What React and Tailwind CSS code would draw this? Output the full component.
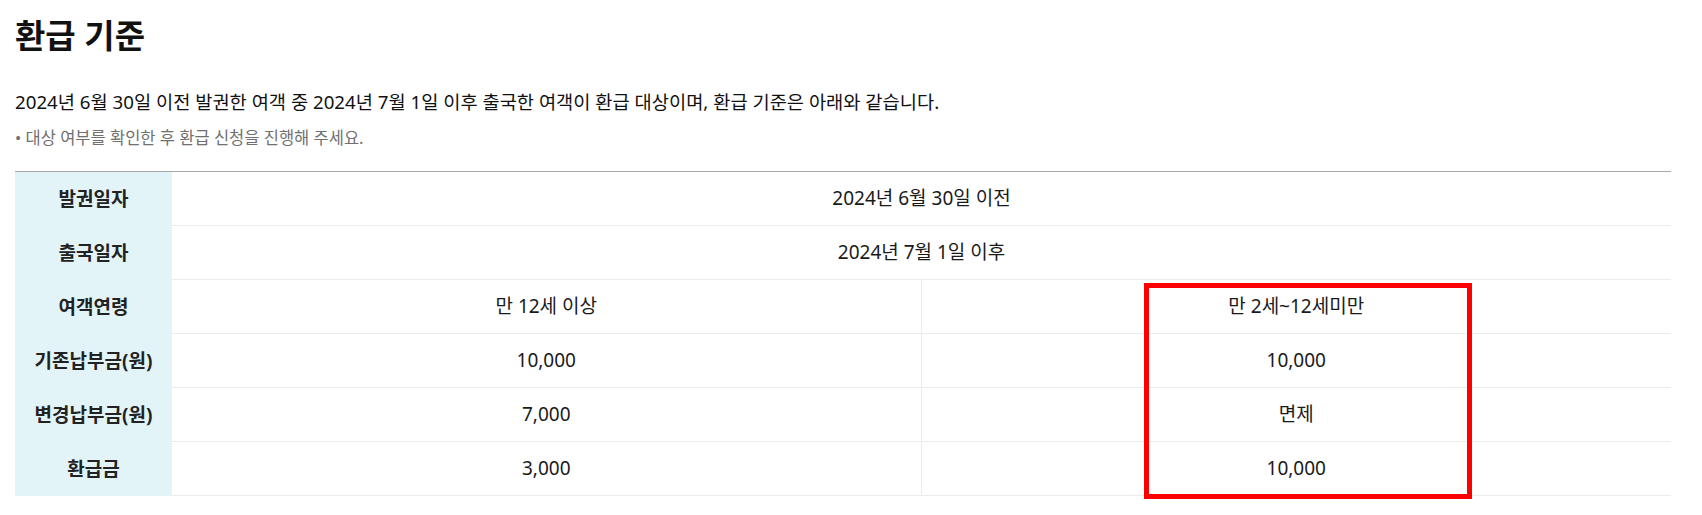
import React from 'react'

const font = { fontFamily: '"Noto Sans", "Noto Sans CJK KR", sans-serif' }

const rows = [
  { label: '발권일자', cells: ['2024년 6월 30일 이전'] },
  { label: '출국일자', cells: ['2024년 7월 1일 이후'] },
  { label: '여객연령', cells: ['만 12세 이상', '만 2세~12세미만'] },
  { label: '기존납부금(원)', cells: ['10,000', '10,000'] },
  { label: '변경납부금(원)', cells: ['7,000', '면제'] },
  { label: '환급금', cells: ['3,000', '10,000'] },
]

function Row({ label, cells }) {
  return (
    <div className="flex h-[54px]">
      <div className="w-[157px] shrink-0 bg-[#e2f4f7] flex items-center justify-center text-[19px] font-bold text-[#222]">
        {label}
      </div>
      {cells.length === 1 ? (
        <div className="flex-1 border-b border-[#ebebeb] flex items-center justify-center text-[19px] text-[#1a1a1a]">
          {cells[0]}
        </div>
      ) : (
        <div className="flex-1 grid grid-cols-2 border-b border-[#ebebeb]">
          <div className="flex items-center justify-center text-[19px] text-[#1a1a1a] border-r border-[#ebebeb]">
            {cells[0]}
          </div>
          <div className="flex items-center justify-center text-[19px] text-[#1a1a1a]">
            {cells[1]}
          </div>
        </div>
      )}
    </div>
  )
}

export default function App() {
  return (
    <div className="bg-white w-[1702px] h-[515px] pl-[15px] pr-[31px] pt-[14px]" style={font}>
      <h1 className="text-[33px] leading-[44px] font-bold text-[#111]">환급 기준</h1>

      <p className="mt-[30px] text-[18.7px] leading-[28px] text-[#111]">
        2024년 6월 30일 이전 발권한 여객 중 2024년 7월 1일 이후 출국한 여객이 환급 대상이며, 환급 기준은 아래와 같습니다.
      </p>
      <p className="mt-[10px] text-[16.5px] leading-[24px] text-[#707070]">
        • 대상 여부를 확인한 후 환급 신청을 진행해 주세요.
      </p>

      <div className="relative mt-[21px] border-t border-[#a8a8a8]">
        {rows.map((r) => (
          <Row key={r.label} label={r.label} cells={r.cells} />
        ))}
        {/* highlight box */}
        <div className="absolute left-[1129px] top-[111px] w-[328px] h-[216px] border-[5px] border-[#ff0000] pointer-events-none" />
      </div>
    </div>
  )
}
